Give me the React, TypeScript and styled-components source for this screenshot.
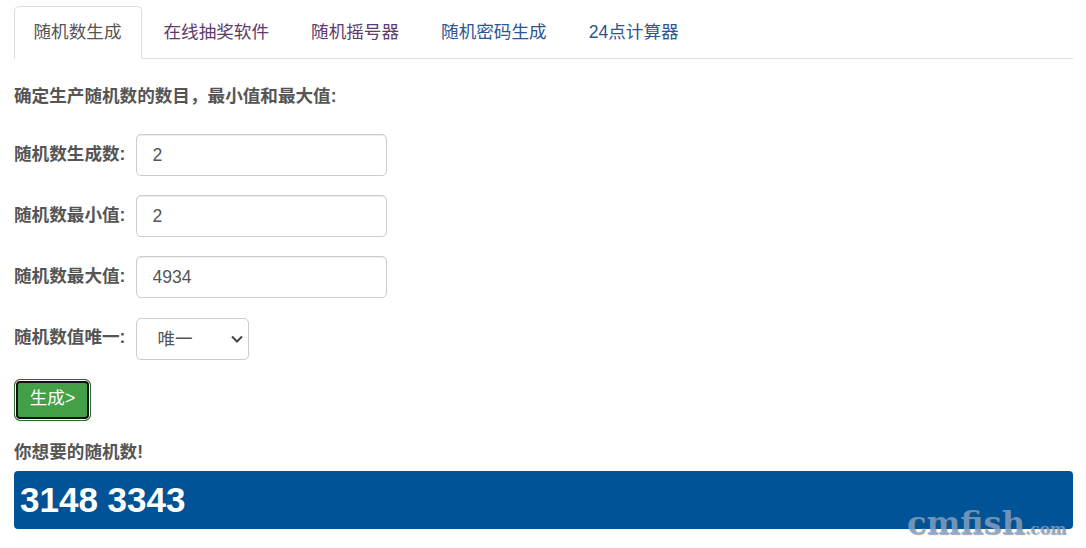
import {useState} from "react";
import styled, {createGlobalStyle} from "styled-components";

const GlobalStyle = createGlobalStyle`
    html, body {
        margin: 0;
        padding: 0;
        background: #fff;
    }
    body {
        font-family: "Liberation Sans", "Noto Sans CJK SC", sans-serif;
        color: #555;
    }
`

const Page = styled.div`
    position: relative;
    width: 1086px;
    height: 548px;
    overflow: hidden;
    box-sizing: border-box;
    padding: 6px 13px 0 14px;
`

const Tabs = styled.ul`
    display: flex;
    list-style: none;
    margin: 0;
    padding: 0;
    height: 53px;
    box-sizing: border-box;
    border-bottom: 1px solid #ddd;
`

const Tab = styled.li<{ $active?: boolean; $color: string }>`
    box-sizing: border-box;
    height: 53px;
    margin-right: 2px;
    padding: 0 19.5px 0 18.5px;
    border: 1px solid ${(p) => (p.$active ? "#ddd" : "transparent")};
    border-bottom-color: ${(p) => (p.$active ? "#fff" : "transparent")};
    border-radius: 5px 5px 0 0;
    background: ${(p) => (p.$active ? "#fff" : "transparent")};
    color: ${(p) => p.$color};
    font-size: 17.6px;
    line-height: 50px;
    white-space: nowrap;
`

const Heading = styled.p`
    margin: 25px 0 0;
    font-size: 17.6px;
    line-height: 24px;
    font-weight: 700;
    color: #555;
`

const Form = styled.form`
    display: flex;
    flex-direction: column;
    align-items: flex-start;
    gap: 19.2px;
    margin-top: 26px;
`

const Row = styled.div`
    display: flex;
    align-items: center;
    height: 42px;
`

const Label = styled.label`
    width: 122px;
    padding-bottom: 6px;
    font-size: 17.6px;
    font-weight: 700;
    color: #555;
    white-space: nowrap;
`

const Input = styled.input`
    box-sizing: border-box;
    width: 251px;
    height: 42px;
    padding: 0 15.5px;
    border: 1px solid #ccc;
    border-radius: 5px;
    box-shadow: inset 0 1px 1px rgba(0, 0, 0, 0.075);
    font-family: inherit;
    font-size: 17.6px;
    color: #555;
    outline: none;
`

const SelectBox = styled.div`
    position: relative;
    box-sizing: border-box;
    width: 113px;
    height: 42px;
    padding-left: 20.5px;
    border: 1px solid #ccc;
    border-radius: 5px;
    background: #fff;
    font-size: 17.6px;
    line-height: 40px;
    color: #555;
`

const Chevron = styled.svg`
    position: absolute;
    right: 4px;
    top: 15px;
    width: 14px;
    height: 10px;
`

const Generate = styled.button`
    box-sizing: border-box;
    width: 77px;
    height: 42px;
    padding: 0 0 6px;
    border: 1px solid #2e6b32;
    border-radius: 6px;
    box-shadow: inset 0 0 0 1px #fff, inset 0 0 0 3px #111;
    background: #43a047;
    color: #fff;
    font-family: inherit;
    font-size: 17.6px;
`

const ResultLabel = styled.p`
    margin: 19px 0 0;
    font-size: 17.6px;
    line-height: 24px;
    font-weight: 700;
    color: #555;
`

const Result = styled.div`
    box-sizing: border-box;
    height: 58px;
    margin-top: 7px;
    padding-left: 6px;
    border-radius: 4px;
    background: #005397;
    color: #fff;
    font-size: 35px;
    line-height: 58px;
    font-weight: 700;
`

const Watermark = styled.div`
    position: absolute;
    left: 907px;
    top: 503px;
    display: flex;
    align-items: baseline;
    font-family: "DejaVu Serif", serif;
    font-weight: 700;
    color: rgba(135, 170, 208, 0.75);
    text-shadow: 1px 1px 1px rgba(80, 80, 80, 0.5);
    font-size: 32px;
    line-height: 40px;
`

const WatermarkTail = styled.span`
    font-size: 15.5px;
`

const tabs = [
    {name: "随机数生成", color: "#555"},
    {name: "在线抽奖软件", color: "#5e3a6e"},
    {name: "随机摇号器", color: "#5e3a6e"},
    {name: "随机密码生成", color: "#2d5590"},
    {name: "24点计算器", color: "#2d5590"},
];

export default function App() {
    const [count, setCount] = useState("2");
    const [min, setMin] = useState("2");
    const [max, setMax] = useState("4934");

    return (
        <>
            <GlobalStyle/>
            <Page>
                <Tabs>
                    {tabs.map((t, i) => (
                        <Tab key={t.name} $active={i === 0} $color={t.color}>{t.name}</Tab>
                    ))}
                </Tabs>
                <Heading>确定生产随机数的数目，最小值和最大值:</Heading>
                <Form onSubmit={(e) => e.preventDefault()}>
                    <Row>
                        <Label>随机数生成数:</Label>
                        <Input value={count} onChange={(e) => setCount(e.target.value)}/>
                    </Row>
                    <Row>
                        <Label>随机数最小值:</Label>
                        <Input value={min} onChange={(e) => setMin(e.target.value)}/>
                    </Row>
                    <Row>
                        <Label>随机数最大值:</Label>
                        <Input value={max} onChange={(e) => setMax(e.target.value)}/>
                    </Row>
                    <Row>
                        <Label>随机数值唯一:</Label>
                        <SelectBox>
                            唯一
                            <Chevron viewBox="0 0 14 10">
                                <path d="M2 2.5 L7 7.5 L12 2.5" fill="none" stroke="#444" strokeWidth="2"/>
                            </Chevron>
                        </SelectBox>
                    </Row>
                    <Generate>生成&gt;</Generate>
                </Form>
                <ResultLabel>你想要的随机数!</ResultLabel>
                <Result>3148 3343</Result>
                <Watermark>cmfish<WatermarkTail>.com</WatermarkTail></Watermark>
            </Page>
        </>
    );
}
